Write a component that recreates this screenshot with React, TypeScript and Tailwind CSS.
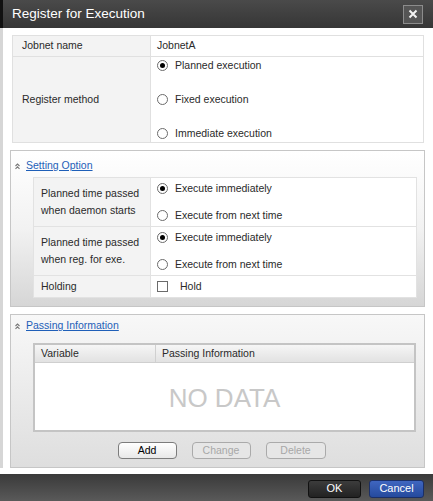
import React from "react";

const Radio = ({ checked }: { checked?: boolean }) => (
  <span className="relative inline-flex h-[11px] w-[11px] shrink-0 items-center justify-center rounded-full border border-[#6b6b6b] bg-white">
    {checked && <span className="h-[5px] w-[5px] rounded-full bg-black" />}
  </span>
);

const RadioItem = ({ checked, label }: { checked?: boolean; label: string }) => (
  <div className="flex h-[14px] items-center gap-[7px] pl-[6px]">
    <Radio checked={checked} />
    <span className="leading-none">{label}</span>
  </div>
);

const SectionIcon = () => (
  <svg width="7" height="8" viewBox="0 0 7 8" className="shrink-0">
    <path d="M1.5 4 L3.5 2 L5.5 4" fill="none" stroke="#777" strokeWidth="1.1" />
    <path d="M1.5 6.8 L3.5 4.8 L5.5 6.8" fill="none" stroke="#777" strokeWidth="1.1" />
  </svg>
);

export default function App() {
  return (
    <div
      className="flex h-[501px] w-[433px] flex-col overflow-hidden bg-white text-[10.5px] text-[#2a2a2a]"
      style={{ fontFamily: '"Liberation Sans", Arial, sans-serif' }}
    >
      {/* Title bar */}
      <div className="flex h-[28px] shrink-0 items-center justify-between border-l-[3px] border-[#111] bg-gradient-to-b from-[#4a4a4a] to-[#363636] pl-[9px] pr-[10px]">
        <span className="text-[13.5px] text-white">Register for Execution</span>
        <div className="flex h-[19px] w-[20px] items-center justify-center border border-[#8c8c8c] bg-[#555]">
          <svg width="10" height="10" viewBox="0 0 10 10">
            <path d="M1.5 1.5 L8.5 8.5 M8.5 1.5 L1.5 8.5" stroke="#f2f2f2" strokeWidth="2" />
          </svg>
        </div>
      </div>

      {/* Body */}
      <div className="flex flex-1 flex-col border-l-[3px] border-[#d6d6d6] pl-[7px] pr-[8px] pt-[7px]">
        {/* Top table */}
        <div className="ml-[2px] mr-[1px] border border-[#e0e0e0]">
          <div className="flex h-[21px] border-b border-[#e0e0e0]">
            <div className="flex w-[138px] items-center border-r border-[#e0e0e0] bg-[#f3f3f3] pl-[9px]">
              Jobnet name
            </div>
            <div className="flex items-center pl-[6px]">JobnetA</div>
          </div>
          <div className="flex h-[85px]">
            <div className="flex w-[138px] items-center border-r border-[#e0e0e0] bg-[#f3f3f3] pl-[9px]">
              Register method
            </div>
            <div className="flex flex-1 flex-col justify-between pb-[2px] pt-[1px]">
              <RadioItem checked label="Planned execution" />
              <RadioItem label="Fixed execution" />
              <RadioItem label="Immediate execution" />
            </div>
          </div>
        </div>

        {/* Setting Option */}
        <div className="mt-[7px] flex h-[157px] flex-col border border-[#c6c6c6] bg-gradient-to-b from-[#ffffff] via-[#f2f2f2] to-[#d6d6d6] pl-[2px] pr-[7px]">
          <div className="flex h-[26px] items-center gap-[5px] pl-[1px] pt-[3px]">
            <SectionIcon />
            <span className="text-[#1f5fb8] underline">Setting Option</span>
          </div>
          <div className="ml-[20px] border border-[#e2e2e2] bg-white">
            <div className="flex h-[49px] border-b border-[#e2e2e2]">
              <div className="flex w-[117px] flex-col justify-center border-r border-[#e2e2e2] bg-[#f3f3f3] pl-[7px] leading-[17px]">
                <span>Planned time passed</span>
                <span>when daemon starts</span>
              </div>
              <div className="flex flex-1 flex-col justify-between pb-[4px] pt-[3px]">
                <RadioItem checked label="Execute immediately" />
                <RadioItem label="Execute from next time" />
              </div>
            </div>
            <div className="flex h-[49px] border-b border-[#e2e2e2]">
              <div className="flex w-[117px] flex-col justify-center border-r border-[#e2e2e2] bg-[#f3f3f3] pl-[7px] leading-[17px]">
                <span>Planned time passed</span>
                <span>when reg. for exe.</span>
              </div>
              <div className="flex flex-1 flex-col justify-between pb-[4px] pt-[3px]">
                <RadioItem checked label="Execute immediately" />
                <RadioItem label="Execute from next time" />
              </div>
            </div>
            <div className="flex h-[21px]">
              <div className="flex w-[117px] items-center border-r border-[#e2e2e2] bg-[#f3f3f3] pl-[7px]">
                Holding
              </div>
              <div className="flex items-center gap-[12px] pl-[6px]">
                <span className="h-[11px] w-[11px] border border-[#6b6b6b] bg-white" />
                <span>Hold</span>
              </div>
            </div>
          </div>
        </div>

        {/* Passing Information */}
        <div className="mt-[7px] flex h-[154px] flex-col border border-[#c6c6c6] bg-gradient-to-b from-[#f8f8f8] to-[#dedede] pl-[2px] pr-[8px]">
          <div className="flex h-[20px] items-center gap-[5px] pl-[1px] pt-[2px]">
            <SectionIcon />
            <span className="text-[#1f5fb8] underline">Passing Information</span>
          </div>
          <div className="ml-[20px] mt-[8px] flex h-[89px] flex-col border-2 border-[#c4c4c4] bg-white">
            <div className="flex h-[18px] shrink-0 border-b border-[#cfcfcf] bg-gradient-to-b from-[#f6f6f6] to-[#e2e2e2]">
              <div className="flex w-[121px] items-center border-r border-[#d0d0d0] pl-[6px]">Variable</div>
              <div className="flex items-center pl-[6px]">Passing Information</div>
            </div>
            <div className="flex flex-1 items-center justify-center pt-[4px] text-[26px] text-[#c8c8c8]">
              NO DATA
            </div>
          </div>
          <div className="mt-[10px] flex justify-center gap-[15px] pl-[14px]">
            <button className="h-[17px] w-[59px] rounded-[4px] border border-[#7c7c7c] bg-gradient-to-b from-[#ffffff] to-[#e8e8e8] text-[10.5px] leading-none text-black">
              Add
            </button>
            <button className="h-[17px] w-[59px] rounded-[4px] border border-[#aaaaaa] bg-[#e6e6e6] text-[10.5px] leading-none text-[#a8a8a8]">
              Change
            </button>
            <button className="h-[17px] w-[60px] rounded-[4px] border border-[#aaaaaa] bg-[#e6e6e6] text-[10.5px] leading-none text-[#a8a8a8]">
              Delete
            </button>
          </div>
        </div>
        <div className="flex-1" />
      </div>

      {/* Footer */}
      <div className="mt-[6px] flex h-[29px] shrink-0 items-center justify-end gap-[8px] bg-gradient-to-b from-[#3a3a3a] to-[#5c5c5c] pr-[9px]">
        <button className="h-[18px] w-[53px] rounded-[3px] border border-[#111] bg-gradient-to-b from-[#3c3c3c] to-[#222] text-[11px] leading-none text-white">
          OK
        </button>
        <button className="h-[18px] w-[55px] rounded-[3px] border border-[#1b2f66] bg-gradient-to-b from-[#3f66c0] to-[#254a9d] text-[11px] leading-none text-white">
          Cancel
        </button>
      </div>
    </div>
  );
}
